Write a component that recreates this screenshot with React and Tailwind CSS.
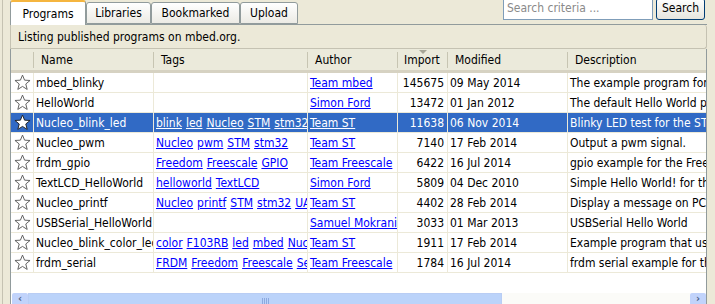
const rows = [
  { name: "mbed_blinky", tags: [], author: "Team mbed", imp: "145675", date: "09 May 2014", desc: "The example program for mbed pin-compatible platforms" },
  { name: "HelloWorld", tags: [], author: "Simon Ford", imp: "13472", date: "01 Jan 2012", desc: "The default Hello World program for mbed" },
  { name: "Nucleo_blink_led", tags: ["blink", "led", "Nucleo", "STM", "stm32"], author: "Team ST", imp: "11638", date: "06 Nov 2014", desc: "Blinky LED test for the ST Nucleo boards", selected: true },
  { name: "Nucleo_pwm", tags: ["Nucleo", "pwm", "STM", "stm32"], author: "Team ST", imp: "7140", date: "17 Feb 2014", desc: "Output a pwm signal." },
  { name: "frdm_gpio", tags: ["Freedom", "Freescale", "GPIO"], author: "Team Freescale", imp: "6422", date: "16 Jul 2014", desc: "gpio example for the Freescale freedom platform" },
  { name: "TextLCD_HelloWorld", tags: ["helloworld", "TextLCD"], author: "Simon Ford", imp: "5809", date: "04 Dec 2010", desc: "Simple Hello World! for the TextLCD library" },
  { name: "Nucleo_printf", tags: ["Nucleo", "printf", "STM", "stm32", "UART"], author: "Team ST", imp: "4402", date: "28 Feb 2014", desc: "Display a message on PC using UART." },
  { name: "USBSerial_HelloWorld", tags: [], author: "Samuel Mokrani", imp: "3033", date: "01 Mar 2013", desc: "USBSerial Hello World" },
  { name: "Nucleo_blink_color_led", tags: ["color", "F103RB", "led", "mbed", "Nucleo"], author: "Team ST", imp: "1911", date: "17 Feb 2014", desc: "Example program that uses the RGB LED" },
  { name: "frdm_serial", tags: ["FRDM", "Freedom", "Freescale", "Serial"], author: "Team Freescale", imp: "1784", date: "16 Jul 2014", desc: "frdm serial example for the Freescale platform" },
];

const grid = "grid grid-cols-[23px_120px_154px_90px_50px_120px_260px]";

const Star = ({ filled }) => (
  <svg width="17" height="17" viewBox="0 0 16 16">
    <path
      d="M8 1 L9.95 5.8 L15.1 6.1 L11.1 9.4 L12.4 14.5 L8 11.7 L3.6 14.5 L4.9 9.4 L0.9 6.1 L6.05 5.8 Z"
      fill="#ffffff"
      stroke={filled ? "#1e1e1e" : "#5c5c5c"}
      strokeWidth="0.9"
      strokeLinejoin="round"
    />
  </svg>
);

const Tab = ({ label, active }) => (
  <div
    className={
      active
        ? "relative z-10 -mb-px flex h-[25px] w-[76px] items-center justify-center rounded-t-[3px] border border-b-0 border-[#919b9c] border-t-2 border-t-[#f5b53f] bg-white"
        : "mt-[2px] flex h-[22px] items-center justify-center rounded-t-[3px] border border-[#919b9c] bg-gradient-to-b from-white to-[#ecebe5]"
    }
  >
    {label}
  </div>
);

export default function App() {
  return (
    <div className="h-[304px] w-[715px] overflow-hidden bg-[#ece9d8] pl-[2px] font-['DejaVu_Sans_Condensed','DejaVu_Sans',sans-serif] text-[12px] text-black">
      <div className="flex w-[705px] flex-col border-l border-[#c5c2b2] pl-[7px]">
        {/* tabs and search */}
        <div className="flex h-[25px] items-start justify-between border-b border-[#919b9c]">
          <div className="flex items-start">
            <Tab label="Programs" active />
            <div className="flex">
              <div className="w-[65px]"><Tab label="Libraries" /></div>
              <div className="w-[89px]"><Tab label="Bookmarked" /></div>
              <div className="w-[58px]"><Tab label="Upload" /></div>
            </div>
          </div>
          <div className="-mt-[2px] flex items-start gap-[3px] pr-[2px]">
            <div className="flex h-[22px] w-[150px] items-end border border-[#7f9db9] bg-white pb-[2px] pl-[3px] text-[#8a8a8a]">
              Search criteria ...
            </div>
            <div className="flex h-[22px] w-[49px] items-end justify-center rounded-[3px] border border-[#003c74] bg-gradient-to-b from-white to-[#e6e5de] pb-[2px]">
              Search
            </div>
          </div>
        </div>

        {/* info bar */}
        <div className="flex h-[24px] items-center rounded-r-[3px] border-x border-b border-[#c5c2b2] bg-[#ece9d8] pl-[7px]">
          Listing published programs on mbed.org.
        </div>

        {/* table */}
        <div className="flex flex-col overflow-hidden border-x border-[#919b9c] bg-white">
          <div className={`${grid} h-[24px] border-b-[3px] border-[#d6d2c2] bg-[#ebeadb]`}>
            {["", "Name", "Tags", "Author", "Import", "Modified", "Description"].map((h, i) => (
              <div key={i} className="relative flex items-center">
                <span className={i === 4 ? "pl-[6px]" : "pl-[7px]"}>{h}</span>
                <div className="absolute right-0 top-[3px] h-[16px] border-r border-[#c7c5b2]" />
                {i === 4 && (
                  <div className="absolute left-[21px] top-[1px] h-0 w-0 border-x-[4px] border-t-[4px] border-x-transparent border-t-[#a7a697]" />
                )}
              </div>
            ))}
          </div>

          {rows.map((r) => {
            const sel = r.selected;
            const link = sel ? "text-white underline" : "text-[#0000ff] underline";
            const cell = `flex h-[20px] items-center overflow-hidden whitespace-nowrap border-r border-b border-[#ece9d8] ${sel ? "bg-[#316ac5] text-white" : ""}`;
            return (
              <div key={r.name} className={grid}>
                <div className={`${cell} justify-center`}>
                  <Star filled={sel} />
                </div>
                <div className={`${cell} pl-[2px]`}>{r.name}</div>
                <div className={`${cell} gap-[4px] pl-[2px]`}>
                  {r.tags.map((t) => (
                    <span key={t} className={link}>{t}</span>
                  ))}
                </div>
                <div className={`${cell} pl-[2px]`}>
                  <span className={link}>{r.author}</span>
                </div>
                <div className={`${cell} justify-end pr-[3px]`}>{r.imp}</div>
                <div className={`${cell} pl-[2px]`}>{r.date}</div>
                <div className={`${cell} pl-[2px]`}>{r.desc}</div>
              </div>
            );
          })}

          <div className="h-[20px]" />

          {/* horizontal scrollbar */}
          <div className="flex h-[17px] shrink-0 pl-px">
            <div className="flex w-[16px] items-start justify-center rounded-[2px] bg-[#c1d3fb] text-[11px] font-bold leading-[12px] text-[#4d6185]">
              ‹
            </div>
            <div className="relative flex w-[474px] justify-center border border-[#b9cdf4] bg-[#bbd3fa] pt-[4px]">
              <div className="flex gap-[1px]">
                <div className="h-[6px] w-px bg-[#8ca9df]" />
                <div className="h-[6px] w-px bg-[#8ca9df]" />
                <div className="h-[6px] w-px bg-[#8ca9df]" />
                <div className="h-[6px] w-px bg-[#8ca9df]" />
              </div>
            </div>
            <div className="flex-1 bg-[#fbfbf8]" />
            <div className="flex w-[16px] items-start justify-center rounded-[2px] bg-[#c1d3fb] text-[11px] font-bold leading-[12px] text-[#4d6185]">
              ›
            </div>
          </div>
        </div>
      </div>
    </div>
  );
}
